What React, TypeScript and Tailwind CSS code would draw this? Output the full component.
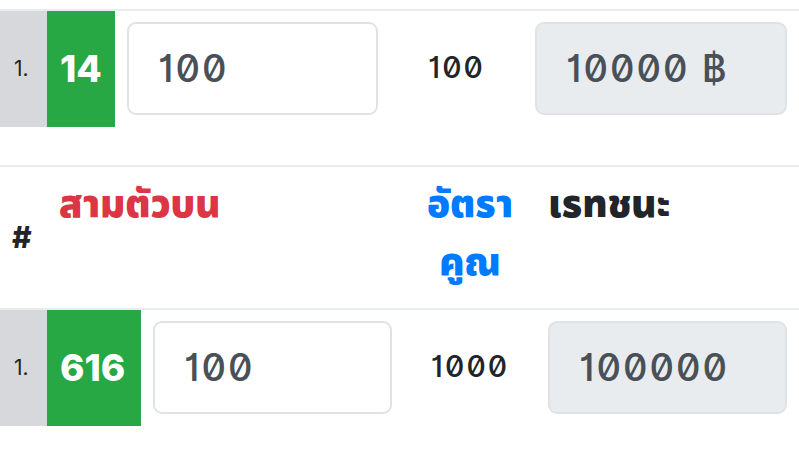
import type { ReactNode } from 'react';

type Bet = { no: string; number: string; amount: string; rate: string; payout: string };

const TWO_TOP: Bet = { no: '1.', number: '14', amount: '100', rate: '100', payout: '10000 ฿' };
const THREE_TOP: Bet = { no: '1.', number: '616', amount: '100', rate: '1000', payout: '100000' };

const num = "font-['Inter','Liberation_Sans',sans-serif] slashed-zero [font-feature-settings:'zero','cv01']";
const thai = "font-['Noto_Sans_Thai','Noto_Sans','DejaVu_Sans',sans-serif]";

function Field({ value, readOnly }: { value: string; readOnly?: boolean }) {
  return (
    <div
      className={`flex h-[93px] w-full items-center rounded-[9px] border-2 border-[#dfe3e7] px-[29px] text-[38px] font-medium tracking-[2px] text-[#495057] ${num} ${
        readOnly ? 'bg-[#e9ecef]' : 'bg-white'
      }`}
    >
      {value}
    </div>
  );
}

function Row({ bet, cols }: { bet: Bet; cols: string }) {
  return (
    <div className={`grid ${cols} h-[118px] border-t-2 border-[#e9ecef]`}>
      <div className="flex items-center bg-[#d6d8db] pl-[14px] font-['Inter',sans-serif] text-[21px] text-[#212529]">
        {bet.no}
      </div>
      <div className="flex items-center bg-[#28a745] pl-[13px] font-['Inter',sans-serif] text-[37px] font-extrabold text-white">
        {bet.number}
      </div>
      <div className="px-3 pt-[11px]">
        <Field value={bet.amount} />
      </div>
      <div className={`flex items-center justify-center pb-[4px] text-[30px] font-medium tracking-[2px] text-[#212529] ${num}`}>
        {bet.rate}
      </div>
      <div className="px-3 pt-[11px]">
        <Field value={bet.payout} readOnly />
      </div>
    </div>
  );
}

function Head({ children, className = '' }: { children: ReactNode; className?: string }) {
  return <div className={`px-3 pt-[10px] text-[38px] font-black leading-[58px] ${thai} ${className}`}>{children}</div>;
}

export default function App() {
  const threeCols = 'grid-cols-[47px_94px_263px_132px_1fr]';
  return (
    <div className="h-[454px] w-[799px] overflow-hidden bg-white pt-[9px]">
      <Row bet={TWO_TOP} cols="grid-cols-[47px_68px_275px_133px_1fr]" />

      <div className="mt-[38px]">
        <div className={`grid ${threeCols} h-[143px] border-t-2 border-[#e9ecef]`}>
          <div className="flex items-center pl-3 font-['Inter',sans-serif] text-[30px] font-extrabold text-[#212529]">#</div>
          <Head className="col-span-2 text-[#dc3545]">สามตัวบน</Head>
          <Head className="text-center text-[#007bff]">
            อัตรา
            <br />
            คูณ
          </Head>
          <Head className="text-[#212529]">เรทชนะ</Head>
        </div>
        <Row bet={THREE_TOP} cols={threeCols} />
      </div>
    </div>
  );
}
